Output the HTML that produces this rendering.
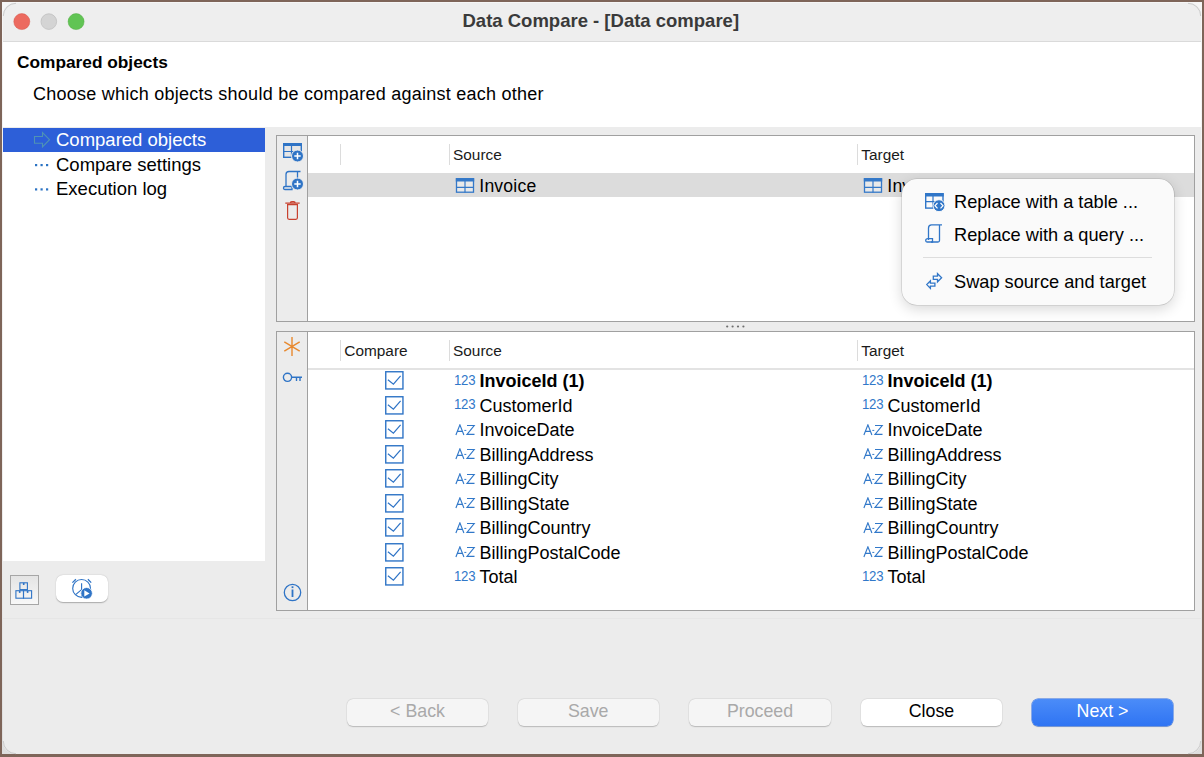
<!DOCTYPE html>
<html><head><meta charset="utf-8">
<style>
*{margin:0;padding:0;box-sizing:border-box}
html,body{width:1204px;height:757px;overflow:hidden;background:#7e6559}
body{font-family:"Liberation Sans",sans-serif;position:relative;color:#000}
.abs{position:absolute}
.t{position:absolute;white-space:nowrap;line-height:1}
.win{position:absolute;left:2px;top:2px;width:1200px;height:752px;background:#fbfbfb;border-radius:11px;overflow:hidden}
.row{font-size:18px;color:#000}
.badge{font-size:15.5px;color:#3178c9;transform:scaleX(0.85);transform-origin:0 0;letter-spacing:-0.3px}
.az{font-size:14.5px;transform:scaleX(0.86)}
.dash{display:inline-block;margin:0 -1px;font-size:11px;vertical-align:2px}
.hdr{font-size:15.4px;color:#1a1a1a}
.menu t{font-size:18.2px}
.btn{position:absolute;height:27px;border-radius:6px;background:#f5f5f5;box-shadow:0 0.6px 1.2px rgba(0,0,0,0.2),0 0 0 0.4px rgba(0,0,0,0.05)}
.btn span{position:absolute;left:0;right:0;text-align:center;top:4.3px;font-size:17.8px;line-height:1}
</style></head><body>
<div class="abs" style="left:2px;top:2px;width:1200px;height:752px;background:linear-gradient(#f6f6f6,#f0f0f0 60%,#dedede)"></div>
<div class="abs" style="left:3px;top:3px;width:1198px;height:751px;background:#ececec;border-radius:12px"></div>

<!-- title bar -->
<div class="abs" style="left:3px;top:3px;width:1198px;height:38px;background:#eeeeee;border-radius:12px 12px 0 0"></div>
<div class="abs" style="left:3px;top:41px;width:1198px;height:1px;background:#dadada"></div>
<svg class="abs" style="left:0;top:0" width="100" height="42">
  <circle cx="21.8" cy="21.6" r="8" fill="#ec6a5f" stroke="#d4574b" stroke-width="0.5"/>
  <circle cx="48.8" cy="21.6" r="7.8" fill="#d4d4d4" stroke="#bfbfbf" stroke-width="0.8"/>
  <circle cx="76.1" cy="21.6" r="8" fill="#61c454" stroke="#52ad43" stroke-width="0.5"/>
</svg>
<div class="t" style="left:462.5px;top:11.5px;font-size:18.5px;font-weight:bold;color:#3a3a3a">Data Compare - [Data compare]</div>
<!-- header -->
<div class="abs" style="left:3px;top:42px;width:1198px;height:85px;background:#fff"></div>
<div class="t" style="left:17px;top:54px;font-size:17.3px;font-weight:bold">Compared objects</div>
<div class="t" style="left:33px;top:85px;font-size:18px;letter-spacing:0.25px">Choose which objects should be compared against each other</div>
<!-- tree -->
<div class="abs" style="left:3px;top:128px;width:262px;height:433px;background:#fff"></div>
<div class="abs" style="left:3px;top:128px;width:262px;height:24px;background:#2d5fd8"></div>
<svg class="abs" style="left:30px;top:128px" width="24" height="24" viewBox="0 0 24 24">
  <path d="M4.5 8.5 H12.5 V4.5 L19.5 11.7 L12.5 19 V15.2 H4.5 Z" fill="none" stroke="#4f93b4" stroke-width="1.1"/>
</svg>
<div class="t" style="left:56px;top:131.2px;font-size:18.5px;color:#fff">Compared objects</div>
<svg class="abs" style="left:30px;top:152.5px" width="24" height="48" viewBox="0 0 24 48">
  <g fill="#2b73c4"><rect x="5" y="11" width="2.2" height="2.2"/><rect x="10.5" y="11" width="2.2" height="2.2"/><rect x="16" y="11" width="2.2" height="2.2"/>
  <rect x="5" y="35.3" width="2.2" height="2.2"/><rect x="10.5" y="35.3" width="2.2" height="2.2"/><rect x="16" y="35.3" width="2.2" height="2.2"/></g>
</svg>
<div class="t" style="left:56px;top:155.5px;font-size:18.5px">Compare settings</div>
<div class="t" style="left:56px;top:179.8px;font-size:18.5px">Execution log</div>

<!-- bottom-left buttons -->
<div class="abs" style="left:10px;top:575px;width:29px;height:30px;border:1.2px solid #a6a6a6;background:linear-gradient(#e4e4e4,#f8f8f8)"></div>
<svg class="abs" style="left:10px;top:575px" width="29" height="30" viewBox="0 0 29 30">
  <g fill="none" stroke="#2f74c6" stroke-width="1.1">
    <rect x="9.9" y="7.8" width="7.5" height="6.8"/>
    <rect x="5.9" y="15.7" width="7.6" height="7.5"/>
    <rect x="13.5" y="15.7" width="8.1" height="7.5"/>
  </g>
  <g fill="#2f74c6"><rect x="12.9" y="7.8" width="1.6" height="2.2"/><rect x="8.9" y="15.7" width="1.6" height="2.2"/><rect x="16.8" y="15.7" width="1.6" height="2.2"/></g>
</svg>
<div class="abs" style="left:56px;top:575px;width:51.5px;height:27px;border-radius:7px;background:#fff;box-shadow:0 0.6px 1.2px rgba(0,0,0,0.28)"></div>
<svg class="abs" style="left:56px;top:575px" width="52" height="28" viewBox="0 0 52 28">
  <g fill="none" stroke="#2f74c6" stroke-width="1.15">
    <circle cx="25.6" cy="13.4" r="8.9"/>
    <path d="M25.6 8.3 V22 M25.6 14.6 L19.6 19.6"/>
    <path d="M16.4 7.6 L19.9 4.2 M31.9 4.3 L35.2 7.6" stroke-width="1.3"/>
  </g>
  <circle cx="30.6" cy="18.3" r="5.8" fill="#2f74c6" stroke="#fff" stroke-width="0.8"/>
  <path d="M28.3 15.3 L33.6 18.4 L28.3 21.5 Z" fill="#fff"/>
</svg>

<!-- top grid -->
<div class="abs" style="left:276px;top:135px;width:919px;height:187px;border:1px solid #a0a0a0;background:#fff"></div>
<div class="abs" style="left:277px;top:136px;width:31px;height:185px;background:#ececec;border-right:1px solid #a0a0a0"></div>
<div class="abs" style="left:340px;top:144px;width:1px;height:21px;background:#dcdcdc"></div>
<div class="abs" style="left:449px;top:144px;width:1px;height:21px;background:#dcdcdc"></div>
<div class="abs" style="left:857px;top:144px;width:1px;height:21px;background:#dcdcdc"></div>
<div class="t hdr" style="left:453px;top:147.2px">Source</div>
<div class="t hdr" style="left:861.3px;top:147.2px">Target</div>
<div class="abs" style="left:308px;top:173px;width:886px;height:24px;background:#dcdcdc"></div>
<svg class="abs" style="left:455px;top:177px" width="21" height="17" viewBox="0 0 21 17">
  <rect x="1.5" y="1.8" width="17" height="13.4" fill="#e9e9e9" stroke="#3478c8" stroke-width="1.3"/>
  <rect x="0.8" y="1.1" width="18.4" height="3.4" fill="#3478c8"/>
  <path d="M10 4 V15.5 M1.5 10.3 H18.5" stroke="#3478c8" stroke-width="1.2"/>
</svg>
<div class="t" style="left:479.3px;top:177.6px;font-size:17.6px;letter-spacing:0.2px">Invoice</div>
<svg class="abs" style="left:863px;top:177px" width="21" height="17" viewBox="0 0 21 17">
  <rect x="1.5" y="1.8" width="17" height="13.4" fill="#e9e9e9" stroke="#3478c8" stroke-width="1.3"/>
  <rect x="0.8" y="1.1" width="18.4" height="3.4" fill="#3478c8"/>
  <path d="M10 4 V15.5 M1.5 10.3 H18.5" stroke="#3478c8" stroke-width="1.2"/>
</svg>
<div class="t" style="left:887.3px;top:177.6px;font-size:17.6px;letter-spacing:0.2px">Invoice</div>
<!-- top toolbar icons -->
<svg class="abs" style="left:277px;top:136px" width="31" height="90" viewBox="0 0 31 90">
  <g stroke="#2f74c6" fill="none">
    <rect x="6.7" y="7.7" width="17.6" height="13.6" stroke-width="1.4" fill="#e6e6e6"/>
    <rect x="6" y="7" width="19" height="3" fill="#2f74c6" stroke="none"/>
    <path d="M14.5 10 V21 M7 15.5 H24" stroke-width="1.2"/>
  </g>
  <circle cx="20.5" cy="20" r="6" fill="#2f74c6" stroke="#ececec" stroke-width="1"/>
  <path d="M20.5 16.8 V23.2 M17.3 20 H23.7" stroke="#fff" stroke-width="1.5"/>
  <g stroke="#2f74c6" fill="none" stroke-width="1.3">
    <path d="M9 50.5 V38.5 Q9 35.5 12 35.5 H23.5 M20.5 35.5 V46"/>
    <path d="M6.5 52 Q6.5 50.5 8 50.5 H15 V53.5 H8 Q6.5 53.5 6.5 52 Z"/>
  </g>
  <circle cx="20.5" cy="48" r="6" fill="#2f74c6" stroke="#ececec" stroke-width="1"/>
  <path d="M20.5 44.8 V51.2 M17.3 48 H23.7" stroke="#fff" stroke-width="1.5"/>
  <g stroke="#c8412f" fill="none" stroke-width="1.2">
    <path d="M8.3 67.2 H22.7 M13.3 67 Q13.3 65.6 14.8 65.6 H16.7 Q18.2 65.6 18.2 67"/>
    <path d="M10.6 68.6 H20.4 V81.8 Q20.4 83.3 18.9 83.3 H12.1 Q10.6 83.3 10.6 81.8 Z"/>
  </g>
</svg>

<!-- splitter dots -->
<svg class="abs" style="left:720px;top:322px" width="30" height="9">
  <g fill="#6e6e6e"><circle cx="7.2" cy="4.5" r="1.1"/><circle cx="12.6" cy="4.5" r="1.1"/><circle cx="18" cy="4.5" r="1.1"/><circle cx="23.4" cy="4.5" r="1.1"/></g>
</svg>

<!-- bottom grid -->
<div class="abs" style="left:276px;top:331px;width:919px;height:280px;border:1px solid #a0a0a0;background:#fff"></div>
<div class="abs" style="left:277px;top:332px;width:31px;height:278px;background:#ececec;border-right:1px solid #a0a0a0"></div>
<div class="abs" style="left:308px;top:368px;width:886px;height:1.5px;background:#e3e3e3"></div>
<div class="abs" style="left:340px;top:340px;width:1px;height:21px;background:#dcdcdc"></div>
<div class="abs" style="left:449px;top:340px;width:1px;height:21px;background:#dcdcdc"></div>
<div class="abs" style="left:857px;top:340px;width:1px;height:21px;background:#dcdcdc"></div>
<div class="t hdr" style="left:344.3px;top:342.8px">Compare</div>
<div class="t hdr" style="left:453px;top:342.8px">Source</div>
<div class="t hdr" style="left:861.3px;top:342.8px">Target</div>
<svg class="abs" style="left:277px;top:332px" width="31" height="280" viewBox="0 0 31 280">
  <g stroke="#e8892e" stroke-width="1.4" fill="none">
    <path d="M15 5 V24 M7.3 9.8 L22.7 19.2 M22.7 9.8 L7.3 19.2"/>
  </g>
  <g stroke="#2f74c6" stroke-width="1.4" fill="none">
    <circle cx="10.5" cy="45.3" r="4.1"/>
    <path d="M14.6 45.3 H25 M19.5 45.3 V49 M23 45.3 V49"/>
  </g>
  <g stroke="#2f74c6" fill="none">
    <circle cx="15.5" cy="260.5" r="8.2" stroke-width="1.3"/>
  </g>
  <rect x="14.6" y="257.5" width="1.8" height="7.5" fill="#2f74c6"/>
  <rect x="14.6" y="254.3" width="1.8" height="1.8" fill="#2f74c6"/>
</svg>
<svg class="abs" style="left:385px;top:371.1px" width="19" height="19" viewBox="0 0 19 19"><rect x="0.75" y="0.75" width="17.2" height="17.2" fill="#fff" stroke="#2f74c6" stroke-width="1.4"/><path d="M2.9 8.8 L8.4 13.2 L15.6 4.9" fill="none" stroke="#2f74c6" stroke-width="1.2"/></svg>
<div class="t badge" style="left:453.6px;top:371.8px">123</div>
<div class="t row" style="left:479.5px;top:372.1px;font-weight:bold;">InvoiceId (1)</div>
<div class="t badge" style="left:861.6px;top:371.8px">123</div>
<div class="t row" style="left:887.5px;top:372.1px;font-weight:bold;">InvoiceId (1)</div>
<svg class="abs" style="left:385px;top:395.6px" width="19" height="19" viewBox="0 0 19 19"><rect x="0.75" y="0.75" width="17.2" height="17.2" fill="#fff" stroke="#2f74c6" stroke-width="1.4"/><path d="M2.9 8.8 L8.4 13.2 L15.6 4.9" fill="none" stroke="#2f74c6" stroke-width="1.2"/></svg>
<div class="t badge" style="left:453.6px;top:396.3px">123</div>
<div class="t row" style="left:479.5px;top:396.6px;">CustomerId</div>
<div class="t badge" style="left:861.6px;top:396.3px">123</div>
<div class="t row" style="left:887.5px;top:396.6px;">CustomerId</div>
<svg class="abs" style="left:385px;top:420.1px" width="19" height="19" viewBox="0 0 19 19"><rect x="0.75" y="0.75" width="17.2" height="17.2" fill="#fff" stroke="#2f74c6" stroke-width="1.4"/><path d="M2.9 8.8 L8.4 13.2 L15.6 4.9" fill="none" stroke="#2f74c6" stroke-width="1.2"/></svg>
<svg class="abs" style="left:455.4px;top:423.5px" width="21" height="12" viewBox="0 0 21 12"><g fill="none" stroke="#3178c9" stroke-width="1.15"><path d="M0.9 11 L4.9 0.9 L8.9 11 M2.4 7.4 H7.4"/><path d="M9.3 6.4 H11.3" stroke-width="1"/><path d="M12 1.5 H19.2 L12 10.4 H19.5"/></g></svg>
<div class="t row" style="left:479.5px;top:421.1px;">InvoiceDate</div>
<svg class="abs" style="left:863.4px;top:423.5px" width="21" height="12" viewBox="0 0 21 12"><g fill="none" stroke="#3178c9" stroke-width="1.15"><path d="M0.9 11 L4.9 0.9 L8.9 11 M2.4 7.4 H7.4"/><path d="M9.3 6.4 H11.3" stroke-width="1"/><path d="M12 1.5 H19.2 L12 10.4 H19.5"/></g></svg>
<div class="t row" style="left:887.5px;top:421.1px;">InvoiceDate</div>
<svg class="abs" style="left:385px;top:444.6px" width="19" height="19" viewBox="0 0 19 19"><rect x="0.75" y="0.75" width="17.2" height="17.2" fill="#fff" stroke="#2f74c6" stroke-width="1.4"/><path d="M2.9 8.8 L8.4 13.2 L15.6 4.9" fill="none" stroke="#2f74c6" stroke-width="1.2"/></svg>
<svg class="abs" style="left:455.4px;top:448.0px" width="21" height="12" viewBox="0 0 21 12"><g fill="none" stroke="#3178c9" stroke-width="1.15"><path d="M0.9 11 L4.9 0.9 L8.9 11 M2.4 7.4 H7.4"/><path d="M9.3 6.4 H11.3" stroke-width="1"/><path d="M12 1.5 H19.2 L12 10.4 H19.5"/></g></svg>
<div class="t row" style="left:479.5px;top:445.6px;">BillingAddress</div>
<svg class="abs" style="left:863.4px;top:448.0px" width="21" height="12" viewBox="0 0 21 12"><g fill="none" stroke="#3178c9" stroke-width="1.15"><path d="M0.9 11 L4.9 0.9 L8.9 11 M2.4 7.4 H7.4"/><path d="M9.3 6.4 H11.3" stroke-width="1"/><path d="M12 1.5 H19.2 L12 10.4 H19.5"/></g></svg>
<div class="t row" style="left:887.5px;top:445.6px;">BillingAddress</div>
<svg class="abs" style="left:385px;top:469.1px" width="19" height="19" viewBox="0 0 19 19"><rect x="0.75" y="0.75" width="17.2" height="17.2" fill="#fff" stroke="#2f74c6" stroke-width="1.4"/><path d="M2.9 8.8 L8.4 13.2 L15.6 4.9" fill="none" stroke="#2f74c6" stroke-width="1.2"/></svg>
<svg class="abs" style="left:455.4px;top:472.5px" width="21" height="12" viewBox="0 0 21 12"><g fill="none" stroke="#3178c9" stroke-width="1.15"><path d="M0.9 11 L4.9 0.9 L8.9 11 M2.4 7.4 H7.4"/><path d="M9.3 6.4 H11.3" stroke-width="1"/><path d="M12 1.5 H19.2 L12 10.4 H19.5"/></g></svg>
<div class="t row" style="left:479.5px;top:470.1px;">BillingCity</div>
<svg class="abs" style="left:863.4px;top:472.5px" width="21" height="12" viewBox="0 0 21 12"><g fill="none" stroke="#3178c9" stroke-width="1.15"><path d="M0.9 11 L4.9 0.9 L8.9 11 M2.4 7.4 H7.4"/><path d="M9.3 6.4 H11.3" stroke-width="1"/><path d="M12 1.5 H19.2 L12 10.4 H19.5"/></g></svg>
<div class="t row" style="left:887.5px;top:470.1px;">BillingCity</div>
<svg class="abs" style="left:385px;top:493.6px" width="19" height="19" viewBox="0 0 19 19"><rect x="0.75" y="0.75" width="17.2" height="17.2" fill="#fff" stroke="#2f74c6" stroke-width="1.4"/><path d="M2.9 8.8 L8.4 13.2 L15.6 4.9" fill="none" stroke="#2f74c6" stroke-width="1.2"/></svg>
<svg class="abs" style="left:455.4px;top:497.0px" width="21" height="12" viewBox="0 0 21 12"><g fill="none" stroke="#3178c9" stroke-width="1.15"><path d="M0.9 11 L4.9 0.9 L8.9 11 M2.4 7.4 H7.4"/><path d="M9.3 6.4 H11.3" stroke-width="1"/><path d="M12 1.5 H19.2 L12 10.4 H19.5"/></g></svg>
<div class="t row" style="left:479.5px;top:494.6px;">BillingState</div>
<svg class="abs" style="left:863.4px;top:497.0px" width="21" height="12" viewBox="0 0 21 12"><g fill="none" stroke="#3178c9" stroke-width="1.15"><path d="M0.9 11 L4.9 0.9 L8.9 11 M2.4 7.4 H7.4"/><path d="M9.3 6.4 H11.3" stroke-width="1"/><path d="M12 1.5 H19.2 L12 10.4 H19.5"/></g></svg>
<div class="t row" style="left:887.5px;top:494.6px;">BillingState</div>
<svg class="abs" style="left:385px;top:518.1px" width="19" height="19" viewBox="0 0 19 19"><rect x="0.75" y="0.75" width="17.2" height="17.2" fill="#fff" stroke="#2f74c6" stroke-width="1.4"/><path d="M2.9 8.8 L8.4 13.2 L15.6 4.9" fill="none" stroke="#2f74c6" stroke-width="1.2"/></svg>
<svg class="abs" style="left:455.4px;top:521.5px" width="21" height="12" viewBox="0 0 21 12"><g fill="none" stroke="#3178c9" stroke-width="1.15"><path d="M0.9 11 L4.9 0.9 L8.9 11 M2.4 7.4 H7.4"/><path d="M9.3 6.4 H11.3" stroke-width="1"/><path d="M12 1.5 H19.2 L12 10.4 H19.5"/></g></svg>
<div class="t row" style="left:479.5px;top:519.1px;">BillingCountry</div>
<svg class="abs" style="left:863.4px;top:521.5px" width="21" height="12" viewBox="0 0 21 12"><g fill="none" stroke="#3178c9" stroke-width="1.15"><path d="M0.9 11 L4.9 0.9 L8.9 11 M2.4 7.4 H7.4"/><path d="M9.3 6.4 H11.3" stroke-width="1"/><path d="M12 1.5 H19.2 L12 10.4 H19.5"/></g></svg>
<div class="t row" style="left:887.5px;top:519.1px;">BillingCountry</div>
<svg class="abs" style="left:385px;top:542.6px" width="19" height="19" viewBox="0 0 19 19"><rect x="0.75" y="0.75" width="17.2" height="17.2" fill="#fff" stroke="#2f74c6" stroke-width="1.4"/><path d="M2.9 8.8 L8.4 13.2 L15.6 4.9" fill="none" stroke="#2f74c6" stroke-width="1.2"/></svg>
<svg class="abs" style="left:455.4px;top:546.0px" width="21" height="12" viewBox="0 0 21 12"><g fill="none" stroke="#3178c9" stroke-width="1.15"><path d="M0.9 11 L4.9 0.9 L8.9 11 M2.4 7.4 H7.4"/><path d="M9.3 6.4 H11.3" stroke-width="1"/><path d="M12 1.5 H19.2 L12 10.4 H19.5"/></g></svg>
<div class="t row" style="left:479.5px;top:543.6px;">BillingPostalCode</div>
<svg class="abs" style="left:863.4px;top:546.0px" width="21" height="12" viewBox="0 0 21 12"><g fill="none" stroke="#3178c9" stroke-width="1.15"><path d="M0.9 11 L4.9 0.9 L8.9 11 M2.4 7.4 H7.4"/><path d="M9.3 6.4 H11.3" stroke-width="1"/><path d="M12 1.5 H19.2 L12 10.4 H19.5"/></g></svg>
<div class="t row" style="left:887.5px;top:543.6px;">BillingPostalCode</div>
<svg class="abs" style="left:385px;top:567.1px" width="19" height="19" viewBox="0 0 19 19"><rect x="0.75" y="0.75" width="17.2" height="17.2" fill="#fff" stroke="#2f74c6" stroke-width="1.4"/><path d="M2.9 8.8 L8.4 13.2 L15.6 4.9" fill="none" stroke="#2f74c6" stroke-width="1.2"/></svg>
<div class="t badge" style="left:453.6px;top:567.8px">123</div>
<div class="t row" style="left:479.5px;top:568.1px;">Total</div>
<div class="t badge" style="left:861.6px;top:567.8px">123</div>
<div class="t row" style="left:887.5px;top:568.1px;">Total</div>

<!-- context menu -->
<div class="abs" style="left:901.5px;top:178.5px;width:272px;height:126px;border-radius:15px;background:#fafafa;box-shadow:0 0 0 0.6px rgba(0,0,0,0.16),0 4px 14px rgba(0,0,0,0.16)"></div>
<svg class="abs" style="left:922px;top:190px" width="28" height="102" viewBox="0 0 28 102">
  <g stroke="#3076c8" fill="none">
    <rect x="3.7" y="3.8" width="17.3" height="14.3" stroke-width="1.4" fill="#fafafa"/>
    <rect x="3" y="3" width="18.7" height="3.5" fill="#3076c8" stroke="none"/>
    <path d="M11 6 V18 M3.5 11.7 H20.5" stroke-width="1.2"/>
  </g>
  <circle cx="17" cy="15.7" r="6" fill="#3076c8" stroke="#fafafa" stroke-width="1"/>
  <path d="M15.5 13 L13 15.7 L15.5 18.4 M18.5 13 L21 15.7 L18.5 18.4" stroke="#fff" stroke-width="1.2" fill="none"/>
  <g stroke="#3076c8" fill="none" stroke-width="1.3">
    <path d="M6.5 50 V38 Q6.5 34.8 9.5 34.8 H20 M17.5 34.8 V50.5 Q17.5 52 16 52 H9"/>
    <path d="M3.7 50.5 Q3.7 48.6 6 48.6 H10.5 V52 H5 Q3.7 52 3.7 50.5 Z"/>
  </g>
  <g stroke="#3076c8" fill="none" stroke-width="1.3" stroke-linejoin="miter">
    <path d="M11.3 86.2 H15.5 V83.6 L19.6 87.8 L15.5 91.9 V89.3 H11.3 Z"/>
    <path d="M12.9 93.1 H8.4 V90.8 L4.8 94.6 L8.4 98.4 V96.2 H12.9 Z"/>
  </g>
</svg>
<div class="t" style="left:954px;top:193px;font-size:18.2px">Replace with a table ...</div>
<div class="t" style="left:954px;top:225.8px;font-size:18.2px">Replace with a query ...</div>
<div class="abs" style="left:923px;top:257px;width:229px;height:1px;background:#dddddd"></div>
<div class="t" style="left:954px;top:273.3px;font-size:18.2px">Swap source and target</div>

<!-- bottom separator -->
<div class="abs" style="left:3px;top:617.5px;width:1198px;height:1.5px;background:#e6e6e6"></div>

<!-- buttons -->
<div class="btn" style="left:347px;top:699px;width:141px"><span style="color:#a9a9a9">&lt; Back</span></div>
<div class="btn" style="left:517.5px;top:699px;width:141.5px"><span style="color:#a9a9a9">Save</span></div>
<div class="btn" style="left:689px;top:699px;width:142px"><span style="color:#a9a9a9">Proceed</span></div>
<div class="btn" style="left:861px;top:699px;width:141px;background:#fff"><span>Close</span></div>
<div class="btn" style="left:1032px;top:699px;width:141px;background:linear-gradient(#4b8cf8,#2f74f3);box-shadow:0 0 0 0.5px #2a6ce8,0 0.5px 1px rgba(0,0,0,0.2)"><span style="color:#fff">Next &gt;</span></div>
<svg class="abs" style="left:0;top:0" width="1204" height="757"><g fill="none" stroke="#c6c6c6" stroke-width="0.9">
<path d="M3.3 16 A12.7 12.7 0 0 1 16 3.3"/><path d="M1188 3.3 A12.7 12.7 0 0 1 1200.7 16"/>
<path d="M3.3 741 A12.7 12.7 0 0 0 16 753.7"/><path d="M1188 753.7 A12.7 12.7 0 0 0 1200.7 741"/></g></svg>
</body></html>
